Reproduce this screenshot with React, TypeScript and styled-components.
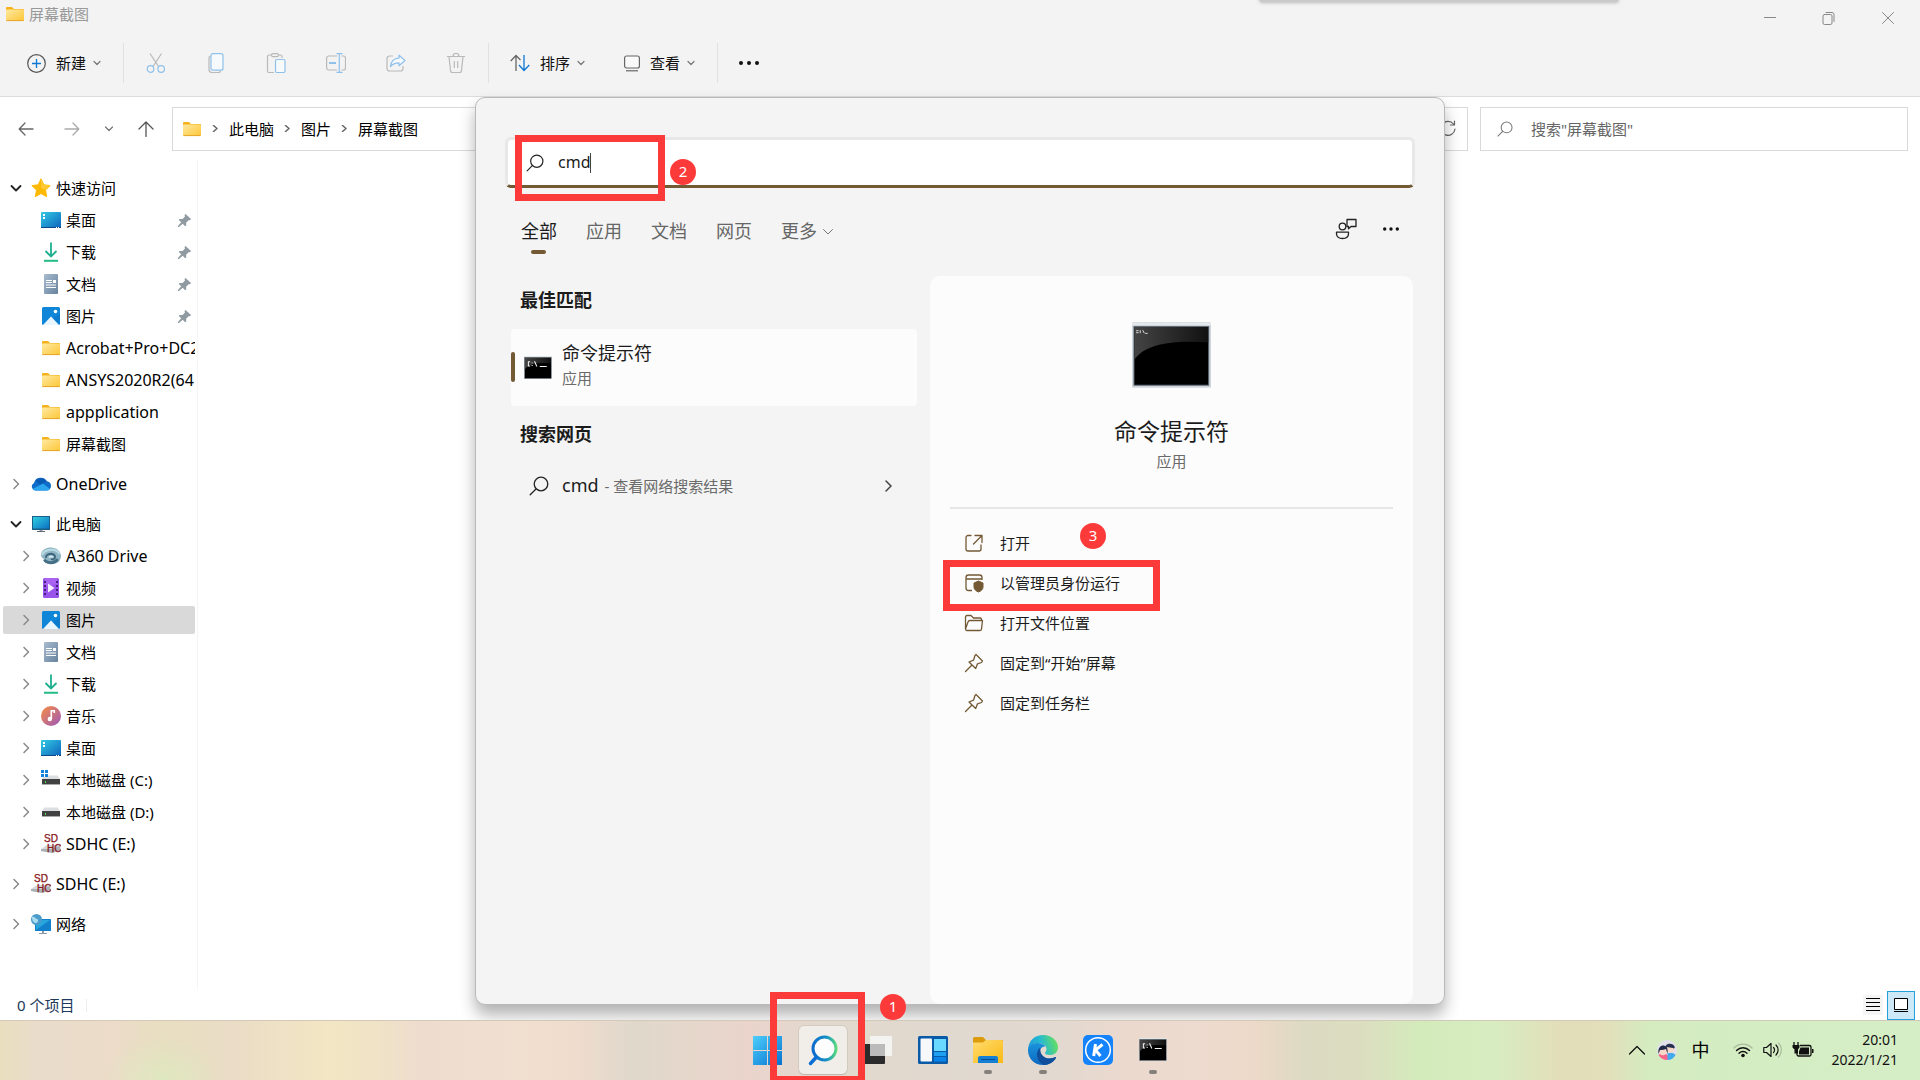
import React, { useId, useState } from "react";
import styled, { createGlobalStyle, css } from "styled-components";

const accent = "#735a35";
const mark = "#fc3a3a";

const GlobalStyle = createGlobalStyle`
  *, *::before, *::after { box-sizing: border-box; }
  body { margin: 0; overflow: hidden; }
  body, button, input {
    font-family: "Noto Sans", "Noto Sans CJK SC", sans-serif;
    font-size: 15px;
    line-height: 24px;
    color: #000;
  }
  button { border: 0; background: none; padding: 0; cursor: default; }
  ul { list-style: none; margin: 0; padding: 0; }
  h1, h2, h3, p { margin: 0; }
  svg { display: block; flex: none; }
`;

/* ---------- layout ---------- */

const Desktop = styled.div`
  display: flex;
  flex-direction: column;
  height: 100vh;
  overflow: hidden;
  background: #fff;
  position: relative;
`;

const Header = styled.header`
  background: #f3f3f3;
  border-bottom: 1px solid #dcdcdc;
`;

const HiddenWindowEdge = styled.div`
  position: absolute;
  top: -8px;
  right: 302px;
  width: 358px;
  height: 10px;
  background: #c9c9c9;
  box-shadow: 0 0 4px rgba(0, 0, 0, 0.35);
`;

const TitleBar = styled.div`
  display: flex;
  justify-content: space-between;
  align-items: flex-start;
  height: 36px;
  padding: 0 3px 0 5px;
`;

const WindowTitle = styled.h1`
  display: flex;
  align-items: center;
  gap: 4px;
  height: 28px;
  font-size: 15px;
  font-weight: 400;
  color: #999;
`;

const WindowControls = styled.div`
  display: flex;
`;

const WindowButton = styled.button`
  display: grid;
  place-items: center;
  width: 59px;
  height: 36px;
`;

const Toolbar = styled.div`
  display: flex;
  align-items: center;
  height: 60px;
  padding: 0 8px 6px;
`;

const TextCommand = styled.button`
  display: flex;
  align-items: center;
  height: 40px;
  padding: 0 20px 0 19px;
  gap: 10px;
  color: #111;
`;

const CommandLabel = styled.span`
  display: flex;
  align-items: center;
  gap: 7px;
`;

const IconCommand = styled.button`
  display: grid;
  place-items: center;
  width: 60px;
  height: 40px;
`;

const Separator = styled.span`
  width: 1px;
  height: 40px;
  margin: 0 2px;
  background: #e1e1e1;
`;

const NavBar = styled.div`
  display: flex;
  align-items: center;
  height: 63px;
  padding: 0 12px 0 3px;
`;

const NavButton = styled.button<{ $narrow?: boolean }>`
  display: grid;
  place-items: center;
  width: ${(p) => (p.$narrow ? 28 : 46)}px;
  height: 40px;
`;

const AddressBar = styled.div`
  display: flex;
  flex: 1;
  align-items: center;
  justify-content: space-between;
  height: 44px;
  margin: 0 12px 0 3px;
  padding: 0 10px 0 9px;
  border: 1px solid #d9d9d9;
`;

const Crumbs = styled.nav`
  display: flex;
  align-items: center;
  gap: 10px;
`;

const Crumb = styled.a`
  color: #000;
  text-decoration: none;
`;

const FolderSearch = styled.label`
  display: flex;
  align-items: center;
  gap: 18px;
  width: 428px;
  height: 44px;
  padding: 0 16px;
  border: 1px solid #d9d9d9;
`;

const FolderSearchInput = styled.input`
  flex: 1;
  min-width: 0;
  padding: 0;
  border: 0;
  outline: 0;
  background: none;
  &::placeholder { color: #666; opacity: 1; }
`;

const Body = styled.div`
  display: flex;
  flex: 1;
  min-height: 0;
`;

const Sidebar = styled.nav`
  display: flex;
  flex-direction: column;
  gap: 12px;
  width: 198px;
  padding: 14px 2px 0 3px;
  border-right: 1px solid #f5f5f5;
`;

const TreeGroup = styled.ul`
  display: flex;
  flex-direction: column;
  gap: 4px;
`;

const TreeItem = styled.li<{ $child?: boolean; $selected?: boolean }>`
  display: flex;
  align-items: center;
  gap: 5px;
  height: 28px;
  padding-left: ${(p) => (p.$child ? 13 : 3)}px;
  border-radius: 2px;
  overflow: hidden;
  background: ${(p) => (p.$selected ? "#d9d9d9" : "transparent")};
`;

const Expander = styled.button`
  display: grid;
  place-items: center;
  flex: none;
  width: 20px;
  height: 20px;
`;

const ExpanderSpace = styled.span`
  flex: none;
  width: 20px;
`;

const TreeLink = styled.a<{ $latin: boolean }>`
  display: flex;
  flex: 1;
  align-items: center;
  gap: 5px;
  min-width: 0;
  color: #000;
  font-size: ${(p) => (p.$latin ? 16 : 15)}px;
  text-decoration: none;
  white-space: nowrap;
`;

const PinSlot = styled.span`
  flex: none;
  padding-right: 4px;
`;

const Content = styled.main`
  flex: 1;
`;

const StatusBar = styled.footer`
  display: flex;
  justify-content: space-between;
  align-items: center;
  height: 30px;
  padding: 0 5px 0 17px;
`;

const ItemCount = styled.span`
  display: flex;
  align-items: center;
  gap: 12px;
  color: #1e395b;
  &::after {
    content: "";
    width: 1px;
    height: 13px;
    background: #eee;
  }
`;

const ViewSwitch = styled.div`
  display: flex;
  align-items: center;
  gap: 4px;
`;

const ViewButton = styled.button<{ $active?: boolean }>`
  display: grid;
  place-items: center;
  width: 20px;
  height: 20px;
  background: #f5f5f5;
  ${(p) =>
    p.$active &&
    css`
      width: 28px;
      height: 29px;
      background: #cde8f6;
      border: 1px solid #26a0da;
    `}
`;

/* ---------- search flyout ---------- */

const Flyout = styled.section`
  position: absolute;
  top: 97px;
  bottom: 75px;
  left: 50%;
  width: 970px;
  transform: translateX(-50%);
  display: flex;
  flex-direction: column;
  padding: 39px 29px 0;
  border: 1px solid #b9b9b9;
  border-radius: 10px;
  background: #f4f4f4;
  color: #1b1b1b;
  box-shadow: 0 10px 16px rgba(0, 0, 0, 0.3);
  z-index: 2;
`;

const SearchBox = styled.label`
  display: flex;
  flex: none;
  align-items: center;
  height: 51px;
  padding: 0 18px;
  border: 3px solid #e8e8e8;
  border-bottom-color: ${accent};
  border-radius: 6px;
  background: #fff;
`;

const SearchInput = styled.input`
  field-sizing: content;
  margin-left: 14px;
  padding: 0 0 2px;
  border: 0;
  outline: 0;
  background: none;
  font-size: 16px;
  color: #1b1b1b;
`;

const Caret = styled.span`
  width: 1px;
  height: 20px;
  background: #444;
`;

const FilterRow = styled.div`
  display: flex;
  flex: none;
  align-items: center;
  justify-content: space-between;
  height: 88px;
  padding: 0 2px 2px 16px;
`;

const Tabs = styled.div`
  display: flex;
  gap: 29px;
`;

const Tab = styled.button<{ $active?: boolean }>`
  position: relative;
  display: flex;
  align-items: center;
  gap: 5px;
  font-size: 18px;
  line-height: 28px;
  color: ${(p) => (p.$active ? "#1b1b1b" : "#666")};
  ${(p) =>
    p.$active &&
    css`
      &::after {
        content: "";
        position: absolute;
        left: 50%;
        bottom: -9px;
        width: 15px;
        height: 4px;
        margin-left: -8px;
        border-radius: 2px;
        background: ${accent};
      }
    `}
`;

const FilterActions = styled.div`
  display: flex;
  gap: 1px;
  padding-bottom: 4px;
`;

const FlyoutIconButton = styled.button`
  display: grid;
  place-items: center;
  width: 44px;
  height: 36px;
`;

const FlyoutBody = styled.div`
  display: grid;
  flex: 1;
  grid-template-columns: minmax(0, 406fr) minmax(0, 483fr);
  column-gap: 13px;
  padding: 0 2px 0 6px;
`;

const SectionTitle = styled.h2`
  padding: 0 0 5px 9px;
  font-size: 18px;
  line-height: 48px;
  font-weight: 700;
`;

const BestMatch = styled.button`
  position: relative;
  display: flex;
  align-items: center;
  gap: 10px;
  width: 100%;
  height: 77px;
  margin-bottom: 4px;
  padding: 0 0 0 13px;
  border-radius: 4px;
  background: #fcfcfc;
  text-align: left;
  &::before {
    content: "";
    position: absolute;
    left: 0;
    top: 23px;
    width: 4px;
    height: 30px;
    border-radius: 2px;
    background: ${accent};
  }
`;

const MatchText = styled.span`
  display: flex;
  flex-direction: column;
  padding-bottom: 6px;
`;

const MatchTitle = styled.span`
  font-size: 18px;
  line-height: 26px;
  color: #1b1b1b;
`;

const Muted = styled.span`
  font-size: 15px;
  line-height: 24px;
  color: #6a6a6a;
`;

const WebResult = styled.button`
  display: flex;
  align-items: center;
  gap: 13px;
  width: 100%;
  height: 46px;
  padding: 0 22px 0 18px;
  text-align: left;
`;

const WebText = styled.span`
  display: flex;
  flex: 1;
  align-items: baseline;
  gap: 6px;
  padding-bottom: 3px;
`;

const Preview = styled.article`
  padding: 46px 20px 0;
  border-radius: 10px;
  background: #fcfcfc;
`;

const PreviewHead = styled.div`
  display: flex;
  flex-direction: column;
  align-items: center;
  padding-bottom: 34px;
  border-bottom: 2px solid #e6e6e6;
`;

const PreviewTitle = styled.h3`
  margin: 28px 0 3px;
  font-size: 23px;
  line-height: 30px;
  font-weight: 400;
`;

const ActionList = styled.ul`
  padding: 14px 0 0 14px;
`;

const ActionButton = styled.button`
  display: flex;
  align-items: center;
  gap: 16px;
  width: 100%;
  height: 40px;
  text-align: left;
  color: #1b1b1b;
`;

/* ---------- taskbar ---------- */

const TaskbarRoot = styled.footer`
  position: relative;
  z-index: 3;
  display: grid;
  grid-template-columns: 1fr auto 1fr;
  flex: none;
  height: 60px;
  border-top: 1px solid #d3c9b9;
  background:
    radial-gradient(ellipse 60px 44px at 8.5% 100%, #dfe8c0, rgba(223, 232, 192, 0)),
    linear-gradient(90deg,
      #e9dfbf 0%, #eadccb 2%, #ecdcc9 6%, #e8dec0 8.5%, #eadcc6 12%,
      #f3e6c4 17%, #f0e3c6 19.5%, #eedccf 22%, #f1dfd0 27%, #efdccd 30%,
      #dfd8cb 33%, #e6d7cb 36%, #ead4cc 39%, #e2d9ce 43%, #e0d9cf 50%,
      #e2d9d0 55%, #ebd9ce 58.5%, #eedbcf 62.5%, #ecd9c8 65.5%, #dcdac2 68%,
      #dcdec0 71%, #d3ebbb 74%, #d8ecc1 78%, #e3ddb9 81.5%, #e3dfbb 83.5%,
      #d4ecc0 86%, #d6eec6 100%);
`;

const TaskbarApps = styled.div`
  grid-column: 2;
  display: flex;
  padding-bottom: 2px;
`;

const TaskSlot = styled.div<{ $running?: boolean }>`
  position: relative;
  display: grid;
  place-items: center;
  width: 55px;
  ${(p) =>
    p.$running &&
    css`
      &::after {
        content: "";
        position: absolute;
        left: 24px;
        bottom: 4px;
        width: 8px;
        height: 4px;
        border-radius: 2px;
        background: #85807a;
      }
    `}
`;

const TaskButton = styled.button<{ $active?: boolean }>`
  display: grid;
  place-items: center;
  width: 48px;
  height: 48px;
  border-radius: 5px;
  ${(p) =>
    p.$active &&
    css`
      background: #f1eee9;
      box-shadow: 0 0 0 1px rgba(0, 0, 0, 0.06), 0 1px 1px rgba(0, 0, 0, 0.1);
    `}
`;

const Tray = styled.div`
  display: flex;
  align-items: center;
  justify-content: flex-end;
  padding: 0 22px 2px 0;
  color: #111;
`;

const TrayButton = styled.button<{ $wide?: boolean }>`
  display: grid;
  place-items: center;
  width: ${(p) => (p.$wide ? 38 : 30)}px;
  height: 40px;
  font-size: 18px;
`;

const TraySpacer = styled.span`
  width: 8px;
`;

const Clock = styled.button`
  margin-left: 14px;
  font-size: 14px;
  line-height: 20px;
  text-align: right;
  color: #111;
`;

/* ---------- tutorial marks ---------- */

const Frame = styled.div<{ $x: number; $y: number; $w: number; $h: number }>`
  position: absolute;
  left: ${(p) => p.$x}px;
  top: ${(p) => p.$y}px;
  width: ${(p) => p.$w}px;
  height: ${(p) => p.$h}px;
  border: 7px solid ${mark};
  pointer-events: none;
`;

const Step = styled.span<{ $x: number; $y: number }>`
  position: absolute;
  left: ${(p) => p.$x}px;
  top: ${(p) => p.$y}px;
  width: 26px;
  height: 26px;
  border-radius: 50%;
  background: ${mark};
  color: #fff;
  font-size: 15px;
  line-height: 24px;
  text-align: center;
  pointer-events: none;
`;

/* ---------- icons ---------- */

type LineProps = { d: string; size?: number; color?: string; width?: number };

const Line = ({ d, size = 20, color = "#333", width = 1 }: LineProps) => (
  <svg width={size} height={size} viewBox={`0 0 ${size} ${size}`} fill="none" stroke={color}
    strokeWidth={width} strokeLinecap="round" strokeLinejoin="round" aria-hidden="true">
    <path d={d} />
  </svg>
);

const SmallDown = () => <Line size={8} d="M1 2.500 4 5.500l3-3" color="#777" width={1.200} />;

const FolderIcon = ({ size = 20 }: { size?: number }) => {
  const id = useId();
  return (
    <svg width={size} height={size} viewBox="0 0 20 20" aria-hidden="true">
      <defs>
        <linearGradient id={id} x1="0" y1="0" x2="1" y2="1">
          <stop offset="0" stopColor="#ffe9a0" />
          <stop offset="1" stopColor="#fdc637" />
        </linearGradient>
      </defs>
      <path d="M1 4a1 1 0 0 1 1-1h5l2 2h10v3H1z" fill="#f5b21c" />
      <rect x="1" y="5.5" width="18" height="11.5" rx=".8" fill={`url(#${id})`} />
      <path d="M1.500 16.600h17" stroke="#e5a52a" />
    </svg>
  );
};

const StarIcon = () => (
  <svg width="20" height="20" viewBox="0 0 20 20" aria-hidden="true">
    <path d="m10 .8 2.800 6 6.400.8-4.700 4.500 1.200 6.600-5.700-3.200-5.700 3.200 1.200-6.600L.8 7.600l6.400-.8z" fill="#fdb900" stroke="#fdb900" strokeLinejoin="round" />
    <path d="m10 .8 2.800 6 6.400.8-4.700 4.500L10 10z" fill="#ffc933" />
  </svg>
);

const DesktopIcon = () => {
  const id = useId();
  return (
    <svg width="20" height="20" viewBox="0 0 20 20" aria-hidden="true">
      <defs>
        <linearGradient id={id} x1="0" y1="0" x2="1" y2="1">
          <stop offset="0" stopColor="#33cbe4" />
          <stop offset="1" stopColor="#0d63bd" />
        </linearGradient>
      </defs>
      <rect x="0" y="2" width="20" height="16" rx="1" fill={`url(#${id})`} />
      <path d="M2 4h2v2H2zM2 7h2v2H2z" fill="#fff" />
      <path d="M0 17h20v1H0z" fill="#0b4a86" />
      <path d="M15 17h1v1h-1zM17 17h1v1h-1z" fill="#fff" />
    </svg>
  );
};

const DownloadIcon = () => (
  <svg width="20" height="20" viewBox="0 0 20 20" fill="none" aria-hidden="true">
    <path d="M10 .5v13.500M4.500 9l5.500 5.500L15.500 9" stroke="#1fae8f" strokeWidth="1.800" />
    <path d="M3 18.800h14" stroke="#23bd84" strokeWidth="2" />
  </svg>
);

const DocumentIcon = () => {
  const id = useId();
  return (
    <svg width="20" height="20" viewBox="0 0 20 20" aria-hidden="true">
      <defs>
        <linearGradient id={id} x1="0" y1="0" x2="1" y2="1">
          <stop offset="0" stopColor="#a9bccf" />
          <stop offset="1" stopColor="#67829f" />
        </linearGradient>
      </defs>
      <rect x="3" y="0" width="14" height="20" rx="1" fill={`url(#${id})`} />
      <path d="M5 6.500h6M5 8.500h6M5 11h10M5 13.500h10" stroke="#fff" />
      <path d="M12 6h3v3h-3z" fill="#fff" />
    </svg>
  );
};

const PictureIcon = () => (
  <svg width="20" height="20" viewBox="0 0 20 20" aria-hidden="true">
    <rect x="1" y="1" width="18" height="18" rx="1.500" fill="#0f86d8" />
    <path d="M2 19 10 10.500l8 8.500z" fill="#e9f6ff" />
    <path d="m12 12.500 7-5v11z" fill="#0a68b4" opacity=".35" />
    <circle cx="14.500" cy="5.500" r="1.800" fill="#fff" />
  </svg>
);

const CloudIcon = () => (
  <svg width="20" height="20" viewBox="0 0 20 20" aria-hidden="true">
    <path d="M4 16.500a4 4 0 0 1-1-7.500 7 7 0 0 1 12.800-1.800A4.800 4.800 0 0 1 20 12a4.500 4.500 0 0 1-4.500 4.500z" fill="#0f6cc8" />
    <path d="M4.500 7A7 7 0 0 1 15.800 7.200L10 11z" fill="#0a5bb5" />
    <path d="M1.500 15 12 9.500l7 5.500a4.500 4.500 0 0 1-3.500 1.500H4A4 4 0 0 1 1.500 15z" fill="#2aa5ee" />
  </svg>
);

const MonitorIcon = () => {
  const id = useId();
  return (
    <svg width="20" height="20" viewBox="0 0 20 20" aria-hidden="true">
      <defs>
        <linearGradient id={id} x1="0" y1="0" x2="1" y2="1">
          <stop offset="0" stopColor="#2fd0df" />
          <stop offset="1" stopColor="#0c6fc4" />
        </linearGradient>
      </defs>
      <rect x="1" y="2" width="18" height="14" fill="#1c5f86" />
      <rect x="2" y="3" width="16" height="11.500" fill={`url(#${id})`} />
      <path d="M8.500 16h3v1.500h-3z" fill="#8d99a3" />
      <path d="M6 17h8v1H6z" fill="#5d6a75" />
    </svg>
  );
};

const A360Icon = () => (
  <svg width="20" height="20" viewBox="0 0 20 20" fill="none" aria-hidden="true">
    <path d="M0 9C0 4 5 1.500 10 1.500S20 5 20 10c0 5-4 8-9 8-4 0-7-1.500-8-5-2-1-3-2.500-3-4z" fill="#8fb5c4" />
    <path d="M1 9C3 3 15 1.500 18.500 8" stroke="#b7dae3" strokeWidth="2.200" />
    <path d="M3.500 13.500C5 17.500 14 18 16.500 13" stroke="#456f86" strokeWidth="3" />
    <path d="M5 12c-1-4 7-6 9-2 .8 2.500-2 4-4 3" stroke="#3d647b" strokeWidth="1.800" />
    <path d="M8 11.500c1-1.500 3.500-1.500 4 0" stroke="#e1eef3" strokeWidth="1.500" />
  </svg>
);

const VideoIcon = () => (
  <svg width="20" height="20" viewBox="0 0 20 20" aria-hidden="true">
    <rect x="2" y="0" width="16" height="20" rx="1.500" fill="#9a53ea" />
    <path d="M4 0h12v6L4 9z" fill="#b06af2" opacity=".7" />
    <path d="M3 3h2v2H3zM3 7h2v2H3zM3 11h2v2H3zM3 15h2v2H3zM15 3h2v2h-2zM15 7h2v2h-2zM15 11h2v2h-2zM15 15h2v2h-2z" fill="#44217e" />
    <path d="m7 5.500 6.500 4.500L7 14.500z" fill="#f4ecff" />
  </svg>
);

const MusicIcon = () => {
  const id = useId();
  return (
    <svg width="20" height="20" viewBox="0 0 20 20" aria-hidden="true">
      <defs>
        <linearGradient id={id} x1="0" y1="0" x2="1" y2="1">
          <stop offset=".1" stopColor="#f0894f" />
          <stop offset=".9" stopColor="#a45cae" />
        </linearGradient>
      </defs>
      <circle cx="10" cy="10" r="10" fill={`url(#${id})`} />
      <circle cx="8.800" cy="13" r="2.200" fill="#fff" />
      <path d="M10.300 13V4.800h3V7" stroke="#fff" strokeWidth="1.600" fill="none" />
    </svg>
  );
};

const DriveIcon = ({ system }: { system?: boolean }) => (
  <svg width="20" height="20" viewBox="0 0 20 20" aria-hidden="true">
    <path d="M3.500 5.500h13L19 9H1z" fill="#dcdee1" />
    <rect x="1" y="9" width="18" height="6" fill="#414141" />
    <path d="M1 14.500h18" stroke="#aaa" />
    <path d="M4 11h1v2H4z" fill="#4be04b" />
    {system && (
      <>
        <path d="M0 0h7v7H0z" fill="#fff" />
        <path d="M0 0h3v3H0zM4 0h3v3H4zM0 4h3v3H0zM4 4h3v3H4z" fill="#1583dc" />
      </>
    )}
  </svg>
);

const SdText = styled.text`
  font-family: "Liberation Sans Narrow", "Liberation Sans", sans-serif;
  font-size: 10px;
  fill: #8b1a1e;
  stroke: #8b1a1e;
  stroke-width: 0.3px;
`;

const SdIcon = () => (
  <svg width="20" height="20" viewBox="0 0 20 20" aria-hidden="true">
    <path d="M0 15 6 11h13l1 5-8 3-12-2z" fill="#d4d8db" />
    <path d="M0 15h10l9-3v4l-8 3-11-2z" fill="#aab1b7" />
    <SdText x="3" y="8">SD</SdText>
    <SdText x="6" y="18">HC</SdText>
  </svg>
);

const NetworkIcon = () => (
  <svg width="20" height="20" viewBox="0 0 20 20" aria-hidden="true">
    <rect x="4" y="5" width="16" height="12" rx=".5" fill="#1380cc" />
    <path d="M5 6h14l-14 10z" fill="#27a5dd" />
    <path d="M11 17h2v2h-2zM8 19h8v1H8z" fill="#8d99a3" />
    <circle cx="5.500" cy="5.500" r="5.500" fill="#4a9ccb" />
    <path d="M1 3c3-1 3 2 5 2s1 4-1 4-4-2-4-6z" fill="#a9dcf0" />
  </svg>
);

const PinnedIcon = () => (
  <svg width="13" height="13" viewBox="0 0 13 13" aria-hidden="true">
    <path d="M7.500 0 13 5l-1 1.200-1-.2L8.200 8.500v3l-1 .8-2.500-2.500L1 13H0v-1l3.200-3.700L.8 6l.8-1h2.900L7 2.500 6.500 1z" fill="#8f9aa1" />
  </svg>
);

const ConsoleIcon = ({ size }: { size: number }) => {
  const id = useId();
  return (
    <svg width={size} height={(size * 5) / 6} viewBox="0 0 48 40" aria-hidden="true">
      <defs>
        <linearGradient id={id} x1="0" y1="0" x2="1" y2="0">
          <stop offset="0" stopColor="#444" />
          <stop offset="1" stopColor="#111" />
        </linearGradient>
      </defs>
      <rect width="48" height="40" rx=".8" fill="#cfd5da" />
      <path d="M0 1h48" stroke="#e5e9ec" strokeWidth="1.500" />
      <rect x="1.200" y="2.800" width="45.400" height="35.600" fill="#000" stroke="#5d6975" strokeWidth=".6" />
      <path d="M1.500 3h44.800v9.500C26 11 8 13 1.500 23z" fill={`url(#${id})`} />
      {size > 50 ? (
        <path d="M2.500 5.300h1.500M2.500 6.500h1.500M5 5v1.800M6.500 5 7.500 6.800M8 6.900h1.500" stroke="#ddd" strokeWidth=".6" />
      ) : (
        <path d="M10.500 10H7.500v7h3M14 11v1.500M14 15.500v1.500M18 9l4 9M27 18h12" stroke="#f2f2f2" strokeWidth="1.800" fill="none" />
      )}
    </svg>
  );
};

const StartIcon = () => {
  const id = useId();
  return (
    <svg width="30" height="30" viewBox="0 0 30 30" aria-hidden="true">
      <defs>
        <linearGradient id={id} x1="0" y1="0" x2="30" y2="30" gradientUnits="userSpaceOnUse">
          <stop offset="0" stopColor="#4fd0fb" />
          <stop offset="1" stopColor="#0570cf" />
        </linearGradient>
      </defs>
      <path d="M0 1h14v14H0zM15 1h14v14H15zM0 16h14v14H0zM15 16h14v14H15z" fill={`url(#${id})`} />
    </svg>
  );
};

const TaskSearchIcon = () => {
  const id = useId();
  return (
    <svg width="32" height="32" viewBox="0 0 32 32" fill="none" aria-hidden="true">
      <defs>
        <linearGradient id={id} x1="4" y1="0" x2="30" y2="0" gradientUnits="userSpaceOnUse">
          <stop offset="0" stopColor="#0d67cf" />
          <stop offset=".6" stopColor="#1590c4" />
          <stop offset="1" stopColor="#5fe07a" />
        </linearGradient>
      </defs>
      <circle cx="17.500" cy="14.500" r="11.500" fill="#fdfdfd" stroke={`url(#${id})`} strokeWidth="3" />
      <path d="m9.500 23-6 6.500" stroke="#0d6fd6" strokeWidth="3.500" strokeLinecap="round" />
    </svg>
  );
};

const TaskViewIcon = () => (
  <svg width="32" height="32" viewBox="0 0 32 32" aria-hidden="true">
    <rect x="1" y="10" width="22" height="20" rx="1" fill="#2b2b2b" />
    <rect x="8" y="2" width="22" height="20" rx="1" fill="#f5f5f5" opacity=".9" />
    <path d="M8 10h15v12H8z" fill="#bbb" />
  </svg>
);

const WidgetsIcon = () => (
  <svg width="30" height="28" viewBox="0 0 30 28" aria-hidden="true">
    <rect width="30" height="28" rx="1.500" fill="#0a5aa8" />
    <rect x="2.500" y="2.500" width="11.500" height="23" rx="1" fill="#f6f8fa" />
    <path d="M16 3h12v12H16z" fill="#69d9ff" />
    <path d="M16 16h12v4H16z" fill="#1ea0f2" />
    <path d="M16 21h12v4.500H16z" fill="#0a84ea" />
  </svg>
);

const ExplorerIcon = () => {
  const id = useId();
  return (
    <svg width="30" height="28" viewBox="0 0 30 28" aria-hidden="true">
      <defs>
        <linearGradient id={id} x1="0" y1="0" x2="1" y2="1">
          <stop offset="0" stopColor="#ffdc70" />
          <stop offset="1" stopColor="#fbb914" />
        </linearGradient>
      </defs>
      <path d="M0 2.500A1.500 1.500 0 0 1 1.500 1H10l3 3h17v6H0z" fill="#dd9b0e" />
      <path d="M0 6.500h10l3-2.500h16l1 1v22H0z" fill={`url(#${id})`} />
      <path d="M5 27v-5a2 2 0 0 1 2-2h16a2 2 0 0 1 2 2v5z" fill="#1580d3" />
      <path d="M8 23.500h14" stroke="#0b4f93" />
    </svg>
  );
};

const EdgeIcon = () => {
  const a = useId();
  const b = useId();
  return (
    <svg width="30" height="30" viewBox="0 0 30 30" aria-hidden="true">
      <defs>
        <linearGradient id={a} x1="0" y1=".6" x2="1" y2=".4">
          <stop offset="0" stopColor="#2299d8" />
          <stop offset=".45" stopColor="#25b9d2" />
          <stop offset="1" stopColor="#68e05c" />
        </linearGradient>
        <linearGradient id={b} x1="0" y1="0" x2="0" y2="1">
          <stop offset="0" stopColor="#1a93dc" />
          <stop offset="1" stopColor="#0b69c0" />
        </linearGradient>
      </defs>
      <path d="M0 14C1 5 7 0 15 0c9 0 15 6 15 12.500 0 5-4 7.500-8 7.500-3 0-5-1-5-2 0-.8 1.500-1.500 1.500-4 0-3.500-4-6-8.500-6C5 8 1 11 0 14z" fill={`url(#${a})`} />
      <path d="M0 14c1-4 5-6 9.500-6 3.500 0 6.500 1.500 8 3.500-5 0-6.500 4-5.500 8 1 5 6 9 12 7.500C20 30 16 30 15 30 6 30-.5 23 0 14z" fill={`url(#${b})`} />
      <path d="M12.500 12.500c-6 4-4 14.500 3.500 17.500 5 0 10-3 12-7 .4-.8-.2-1.200-.8-.9C20 25.500 11 22 12.500 12.500z" fill="#0f4f9c" />
    </svg>
  );
};

const KIcon = () => (
  <svg width="30" height="30" viewBox="0 0 30 30" fill="none" aria-hidden="true">
    <rect width="30" height="30" rx="5" fill="#1583fb" />
    <circle cx="15" cy="15" r="12.300" stroke="#fff" strokeWidth="1.500" />
    <path d="m12.500 9-1.800 12M19.500 9.500 12.500 15l5 6" stroke="#fff" strokeWidth="3" />
  </svg>
);

const MagnifierIcon = ({ color = "#222", size = 20 }: { color?: string; size?: number }) => (
  <svg width={size} height={size} viewBox="0 0 20 20" fill="none" stroke={color} strokeWidth="1.300" strokeLinecap="round" aria-hidden="true">
    <circle cx="12" cy="8" r="6.800" />
    <path d="M7 13 1.200 18.800" />
  </svg>
);

const AvatarIcon = () => (
  <svg width="20" height="20" viewBox="0 0 20 20" aria-hidden="true">
    <circle cx="10" cy="10" r="10" fill="#e1e1ea" />
    <path d="M1.500 15c2-2 7-2 9 0 1 1.500 1 3.500 0 5-4 .2-7-1.500-9-5z" fill="#f7668a" />
    <path d="M10.500 13.500c3-1.500 6-1 8 1.500-1.500 3-4.500 5-8 5z" fill="#43a9ef" />
    <circle cx="13" cy="8.500" r="4.300" fill="#f6d7c8" />
    <path d="M8.500 7.500C8 3 16 2 17.800 7c-.3 1.500-1.300 2-1.800 1-3 0-5-1-7.500-.5z" fill="#26304f" />
    <circle cx="6" cy="11" r="4.300" fill="#f6d7c8" />
    <path d="M1.500 14c-1-7 3-9 6-8.300 3 .8 3.500 4 3 8.300l-1.500-5c-2 .8-4 1.200-6 1z" fill="#202a48" />
  </svg>
);

const BatteryIcon = () => (
  <svg width="22" height="18" viewBox="0 0 22 18" fill="none" aria-hidden="true">
    <path d="M8 4.500h9.500a1.500 1.500 0 0 1 1.500 1.500v7.500a1.500 1.500 0 0 1-1.500 1.500H6.500A1.500 1.500 0 0 1 5 13.500V10" stroke="#111" strokeWidth="1.300" />
    <path d="M20 8h1.500v4H20zM8.500 6.500H17v7H7v-3z" fill="#111" />
    <path d="M2 1v3M6 1v3" stroke="#111" strokeWidth="1.300" />
    <path d="M.5 4h7v2.500L6 8.500v4H2.500v-4L.5 6.500z" fill="#111" />
  </svg>
);

/* ---------- data ---------- */

type Node = {
  label: string;
  icon: React.ReactNode;
  pinned?: boolean;
  expandable?: boolean;
  open?: boolean;
  selected?: boolean;
};

const groups: { head: Node; children: Node[] }[] = [
  {
    head: { label: "快速访问", icon: <StarIcon />, expandable: true, open: true },
    children: [
      { label: "桌面", icon: <DesktopIcon />, pinned: true },
      { label: "下载", icon: <DownloadIcon />, pinned: true },
      { label: "文档", icon: <DocumentIcon />, pinned: true },
      { label: "图片", icon: <PictureIcon />, pinned: true },
      { label: "Acrobat+Pro+DC2", icon: <FolderIcon /> },
      { label: "ANSYS2020R2(64", icon: <FolderIcon /> },
      { label: "appplication", icon: <FolderIcon /> },
      { label: "屏幕截图", icon: <FolderIcon /> },
    ],
  },
  { head: { label: "OneDrive", icon: <CloudIcon />, expandable: true }, children: [] },
  {
    head: { label: "此电脑", icon: <MonitorIcon />, expandable: true, open: true },
    children: [
      { label: "A360 Drive", icon: <A360Icon />, expandable: true },
      { label: "视频", icon: <VideoIcon />, expandable: true },
      { label: "图片", icon: <PictureIcon />, expandable: true, selected: true },
      { label: "文档", icon: <DocumentIcon />, expandable: true },
      { label: "下载", icon: <DownloadIcon />, expandable: true },
      { label: "音乐", icon: <MusicIcon />, expandable: true },
      { label: "桌面", icon: <DesktopIcon />, expandable: true },
      { label: "本地磁盘 (C:)", icon: <DriveIcon system />, expandable: true },
      { label: "本地磁盘 (D:)", icon: <DriveIcon />, expandable: true },
      { label: "SDHC (E:)", icon: <SdIcon />, expandable: true },
    ],
  },
  { head: { label: "SDHC (E:)", icon: <SdIcon />, expandable: true }, children: [] },
  { head: { label: "网络", icon: <NetworkIcon />, expandable: true }, children: [] },
];

const editCommands: { label: string; icon: React.ReactNode }[] = [
  {
    label: "剪切",
    icon: (
      <svg width="20" height="20" viewBox="0 0 20 20" fill="none" strokeWidth="1.200">
        <path d="m4 .5 8.500 13M15.500.5 7 13.500" stroke="#b9b9b9" />
        <circle cx="4.500" cy="16" r="3.300" stroke="#8fc1ea" />
        <circle cx="15.200" cy="16" r="3.300" stroke="#8fc1ea" />
      </svg>
    ),
  },
  {
    label: "复制",
    icon: (
      <svg width="20" height="20" viewBox="0 0 20 20" fill="none" strokeWidth="1.200">
        <path d="M4.500 3A2 2 0 0 0 3 5v11.500A3 3 0 0 0 6 19.500h6.500A2 2 0 0 0 14.500 18" stroke="#b9b9b9" />
        <rect x="5" y=".7" width="12" height="16.500" rx="2" stroke="#8fc1ea" fill="#f6fafd" />
      </svg>
    ),
  },
  {
    label: "粘贴",
    icon: (
      <svg width="20" height="20" viewBox="0 0 20 20" fill="none" strokeWidth="1.200">
        <path d="M6 2H3a1.500 1.500 0 0 0-1.500 1.500V18A1.500 1.500 0 0 0 3 19.500h5M12 2h2.500A1.500 1.500 0 0 1 16 3.500V5" stroke="#b9b9b9" />
        <rect x="5.500" y=".7" width="7" height="3" rx="1.500" stroke="#b9b9b9" />
        <rect x="9.500" y="6.500" width="9.500" height="13" rx="1.500" stroke="#8fc1ea" fill="#f6fafd" />
      </svg>
    ),
  },
  {
    label: "重命名",
    icon: (
      <svg width="20" height="20" viewBox="0 0 20 20" fill="none" strokeWidth="1.200">
        <path d="M11 3H2.500A2 2 0 0 0 .6 5v10a2 2 0 0 0 2 2H11M15.500 3h2a2 2 0 0 1 2 2v10a2 2 0 0 1-2 2h-2" stroke="#b9b9b9" />
        <path d="M3 10h7" stroke="#8fc1ea" strokeWidth="2" />
        <path d="M13.300 1v18M10.500.7h6M10.500 19.400h6" stroke="#8fc1ea" />
      </svg>
    ),
  },
  {
    label: "共享",
    icon: (
      <svg width="20" height="20" viewBox="0 0 20 20" fill="none" strokeWidth="1.200" strokeLinejoin="round">
        <path d="M7 3H3.500A2.500 2.500 0 0 0 1 5.500v10A2.500 2.500 0 0 0 3.500 18h11a2.500 2.500 0 0 0 2.500-2.500V13" stroke="#b9b9b9" />
        <path d="M13 2.200 19 7.500l-6 5.200V9.800c-4 0-6.500 1-8.500 3.800.5-4.800 3-8.300 8.500-8.500z" stroke="#8fc1ea" fill="#f6fafd" />
      </svg>
    ),
  },
  {
    label: "删除",
    icon: (
      <svg width="20" height="20" viewBox="0 0 20 20" fill="none" stroke="#b9b9b9" strokeWidth="1.200">
        <path d="M1 3.500h18M7 3.500a3 3 0 0 1 6 0M3 3.500l1.500 14a2 2 0 0 0 2 2h7a2 2 0 0 0 2-2l1.500-14M8.300 8v7M11.700 8v7" />
      </svg>
    ),
  },
];

const pinPath = "M12 1.500 18.500 8l-1 1.500-4 1.300-1.800 4.700L5 9l4.500-1.800L11 2.500zM8 12l-6.500 6.500";

const previewActions: { label: string; icon: React.ReactNode }[] = [
  { label: "打开", icon: <Line color={accent} width={1.300} d="M7 2.500H4A2 2 0 0 0 2 4.500V16a2 2 0 0 0 2 2h11a2 2 0 0 0 2-2v-4M11 2.500h7v7M17.500 3 9.500 11" /> },
  {
    label: "以管理员身份运行",
    icon: (
      <svg width="20" height="20" viewBox="0 0 20 20" fill="none" stroke={accent} aria-hidden="true">
        <path d="M8 17.500H4.500A2.500 2.500 0 0 1 2 15V4.500A2.500 2.500 0 0 1 4.500 2h11A2.500 2.500 0 0 1 18 4.500V7M2 6h16" strokeWidth="1.300" />
        <path d="m14.500 8 4.500 2v4c0 2.500-2 4-4.500 5-2.500-1-4.500-2.500-4.500-5v-4z" fill={accent} />
      </svg>
    ),
  },
  { label: "打开文件位置", icon: <Line color={accent} width={1.300} d="M1.500 16V4A1.500 1.500 0 0 1 3 2.500h4L9.500 5H16a1.500 1.500 0 0 1 1.500 1.500V7M1.500 16 4 9a2 2 0 0 1 2-1.500h12.500L17.500 16a1.500 1.500 0 0 1-1.500 1.500H3A1.500 1.500 0 0 1 1.500 16z" /> },
  { label: "固定到“开始”屏幕", icon: <Line color={accent} width={1.300} d={pinPath} /> },
  { label: "固定到任务栏", icon: <Line color={accent} width={1.300} d={pinPath} /> },
];

const filters = ["全部", "应用", "文档", "网页"];

/* ---------- parts ---------- */

const isLatin = (label: string) => /^[\x20-\x7e]+$/.test(label);

const TreeRow = ({ node, child }: { node: Node; child?: boolean }) => (
  <TreeItem $child={child} $selected={node.selected}>
    {node.expandable ? (
      <Expander aria-label={node.open ? "折叠" : "展开"}>
        {node.open ? (
          <Line size={12} d="M1.500 4 6 8.500 10.500 4" color="#222" width={1.800} />
        ) : (
          <Line size={12} d="M4 1.500 8.500 6 4 10.500" color="#8a8a8a" width={1.500} />
        )}
      </Expander>
    ) : (
      <ExpanderSpace />
    )}
    <TreeLink href="#" $latin={isLatin(node.label)}>
      {node.icon}
      {node.label}
    </TreeLink>
    {node.pinned && <PinSlot><PinnedIcon /></PinSlot>}
  </TreeItem>
);

const Dots = ({ width, r }: { width: number; r: number }) => (
  <svg width={width} height="6" viewBox={`0 0 ${width} 6`} fill="#111" aria-hidden="true">
    <circle cx={r} cy="3" r={r} />
    <circle cx={width / 2} cy="3" r={r} />
    <circle cx={width - r} cy="3" r={r} />
  </svg>
);

const Explorer = () => (
  <>
    <Header>
      <TitleBar>
        <WindowTitle><FolderIcon />屏幕截图</WindowTitle>
        <WindowControls>
          <WindowButton aria-label="最小化"><Line size={12} d="M0 5.500h12" color="#888" /></WindowButton>
          <WindowButton aria-label="还原">
            <Line size={13} d="M2.500 2.500h6a1.500 1.500 0 0 1 1.500 1.500v7a1.500 1.500 0 0 1-1.500 1.500h-6A1.500 1.500 0 0 1 1 11V4a1.500 1.500 0 0 1 1.500-1.500zM4 .5h6a2 2 0 0 1 2 2v7" color="#888" />
          </WindowButton>
          <WindowButton aria-label="关闭"><Line size={12} d="m.5.5 11 11M11.500.5l-11 11" color="#888" /></WindowButton>
        </WindowControls>
      </TitleBar>
      <Toolbar>
        <TextCommand>
          <svg width="19" height="19" viewBox="0 0 19 19" fill="none" aria-hidden="true">
            <circle cx="9.500" cy="9.500" r="8.800" stroke="#555" strokeWidth="1.200" />
            <path d="M9.500 5v9M5 9.500h9" stroke="#0f78d4" strokeWidth="1.300" />
          </svg>
          <CommandLabel>新建<SmallDown /></CommandLabel>
        </TextCommand>
        <Separator />
        {editCommands.map((c) => (
          <IconCommand key={c.label} aria-label={c.label}>{c.icon}</IconCommand>
        ))}
        <Separator />
        <TextCommand>
          <svg width="20" height="18" viewBox="0 0 20 18" fill="none" strokeWidth="1.300" aria-hidden="true">
            <path d="M6 17V1.500M.7 7 6 1.500 10.500 6" stroke="#666" />
            <path d="M14 1v15.500M9 11l5 5.500 5.300-5.500" stroke="#0f78d4" />
          </svg>
          <CommandLabel>排序<SmallDown /></CommandLabel>
        </TextCommand>
        <TextCommand>
          <svg width="16" height="17" viewBox="0 0 16 17" fill="none" stroke="#666" strokeWidth="1.200" aria-hidden="true">
            <rect x=".6" y="1" width="14.800" height="12" rx="2" fill="#fafafa" />
            <path d="M2 15.800h12" />
          </svg>
          <CommandLabel>查看<SmallDown /></CommandLabel>
        </TextCommand>
        <Separator />
        <TextCommand aria-label="更多选项"><Dots width={20} r={2} /></TextCommand>
      </Toolbar>
    </Header>
    <NavBar>
      <NavButton aria-label="后退"><Line size={16} d="M15 8H1.500M7 2 1.200 8 7 14" color="#666" width={1.300} /></NavButton>
      <NavButton aria-label="前进"><Line size={16} d="M1 8h13.500M9 2l5.800 6L9 14" color="#aaa" width={1.300} /></NavButton>
      <NavButton $narrow aria-label="最近的位置"><Line size={8} d="M.5 2 4 5.500 7.500 2" color="#777" width={1.300} /></NavButton>
      <NavButton aria-label="上移"><Line size={16} d="M8 15.500V1M1 8 8 1l7 7" color="#555" width={1.300} /></NavButton>
      <AddressBar>
        <Crumbs aria-label="路径">
          <FolderIcon />
          {["此电脑", "图片", "屏幕截图"].map((c) => (
            <React.Fragment key={c}>
              <Line size={7} d="M1.500.5 5 3.500 1.500 6.500" color="#666" width={1.500} />
              <Crumb href="#">{c}</Crumb>
            </React.Fragment>
          ))}
        </Crumbs>
        <Line size={18} d="M14.500 4A7 7 0 1 0 16 9M15.500 1v4h-4" color="#666" width={1.200} />
      </AddressBar>
      <FolderSearch>
        <MagnifierIcon size={16} color="#777" />
        <FolderSearchInput type="text" aria-label="搜索文件夹" placeholder={'搜索"屏幕截图"'} />
      </FolderSearch>
    </NavBar>
    <Body>
      <Sidebar aria-label="导航窗格">
        {groups.map((g) => (
          <TreeGroup key={g.head.label}>
            <TreeRow node={g.head} />
            {g.children.map((n) => <TreeRow key={n.label} node={n} child />)}
          </TreeGroup>
        ))}
      </Sidebar>
      <Content />
    </Body>
    <StatusBar>
      <ItemCount>0 个项目</ItemCount>
      <ViewSwitch>
        <ViewButton aria-label="详细信息">
          <svg width="14" height="14" viewBox="0 0 14 14" stroke="#000" aria-hidden="true"><path d="M0 .5h14M0 4.500h14M0 8.500h14M0 12.500h14" /></svg>
        </ViewButton>
        <ViewButton $active aria-label="大图标">
          <svg width="14" height="15" viewBox="0 0 14 15" stroke="#000" fill="#fff" aria-hidden="true"><path d="M.5.500h13v11H.500zM0 13.500h14" /></svg>
        </ViewButton>
      </ViewSwitch>
    </StatusBar>
  </>
);

const SearchFlyout = () => {
  const [query, setQuery] = useState("cmd");
  return (
    <Flyout aria-label="搜索">
      <SearchBox>
        <MagnifierIcon size={18} />
        <SearchInput type="text" aria-label="搜索内容" value={query} onChange={(e) => setQuery(e.target.value)} />
        <Caret />
      </SearchBox>
      <FilterRow>
        <Tabs>
          {filters.map((f, i) => <Tab key={f} $active={i === 0}>{f}</Tab>)}
          <Tab>更多<Line size={12} d="M1.500 4.500 6 9l4.500-4.500" color="#777" /></Tab>
        </Tabs>
        <FilterActions>
          <FlyoutIconButton aria-label="反馈">
            <svg width="22" height="22" viewBox="0 0 22 22" fill="none" stroke="#222" strokeWidth="1.300" strokeLinejoin="round" aria-hidden="true">
              <circle cx="7.500" cy="8.500" r="3.300" />
              <path d="M1.500 14.200h12v1.500c0 3-2.500 4.800-6 4.800s-6-1.800-6-4.800zM12 1.500h9v7h-5l-2.500 2.200V8.500H12z" />
            </svg>
          </FlyoutIconButton>
          <FlyoutIconButton aria-label="选项"><Dots width={16} r={1.700} /></FlyoutIconButton>
        </FilterActions>
      </FilterRow>
      <FlyoutBody>
        <div>
          <SectionTitle>最佳匹配</SectionTitle>
          <BestMatch>
            <ConsoleIcon size={28} />
            <MatchText>
              <MatchTitle>命令提示符</MatchTitle>
              <Muted>应用</Muted>
            </MatchText>
          </BestMatch>
          <SectionTitle>搜索网页</SectionTitle>
          <WebResult>
            <MagnifierIcon />
            <WebText>
              <MatchTitle>cmd</MatchTitle>
              <Muted>- 查看网络搜索结果</Muted>
            </WebText>
            <Line size={12} d="M3 1l5 5-5 5" color="#444" width={1.500} />
          </WebResult>
        </div>
        <Preview>
          <PreviewHead>
            <ConsoleIcon size={79} />
            <PreviewTitle>命令提示符</PreviewTitle>
            <Muted>应用</Muted>
          </PreviewHead>
          <ActionList>
            {previewActions.map((a) => (
              <li key={a.label}><ActionButton>{a.icon}{a.label}</ActionButton></li>
            ))}
          </ActionList>
        </Preview>
      </FlyoutBody>
      <Frame $x={39} $y={37} $w={150} $h={66} />
      <Step $x={194} $y={61}>2</Step>
      <Frame $x={467} $y={462} $w={217} $h={51} />
      <Step $x={604} $y={425}>3</Step>
    </Flyout>
  );
};

const MarkAnchor = styled.div`
  position: absolute;
  left: 50%;
  top: -1px;
`;

const SearchMark = () => (
  <MarkAnchor>
    <Frame $x={-190} $y={-28} $w={95} $h={91} />
    <Step $x={-80} $y={-26}>1</Step>
  </MarkAnchor>
);

const Taskbar = () => (
  <TaskbarRoot>
    <TaskbarApps>
      <TaskSlot><TaskButton aria-label="开始"><StartIcon /></TaskButton></TaskSlot>
      <TaskSlot><TaskButton $active aria-label="搜索"><TaskSearchIcon /></TaskButton></TaskSlot>
      <TaskSlot><TaskButton aria-label="任务视图"><TaskViewIcon /></TaskButton></TaskSlot>
      <TaskSlot><TaskButton aria-label="小组件"><WidgetsIcon /></TaskButton></TaskSlot>
      <TaskSlot $running><TaskButton aria-label="文件资源管理器"><ExplorerIcon /></TaskButton></TaskSlot>
      <TaskSlot $running><TaskButton aria-label="Edge"><EdgeIcon /></TaskButton></TaskSlot>
      <TaskSlot><TaskButton aria-label="酷狗音乐"><KIcon /></TaskButton></TaskSlot>
      <TaskSlot $running><TaskButton aria-label="命令提示符"><ConsoleIcon size={28} /></TaskButton></TaskSlot>
      <SearchMark />
    </TaskbarApps>
    <Tray>
      <TrayButton aria-label="显示隐藏的图标"><Line size={16} d="M.5 12 8 4.500l7.500 7.500" color="#111" width={1.300} /></TrayButton>
      <TrayButton aria-label="好友"><AvatarIcon /></TrayButton>
      <TrayButton $wide>中</TrayButton>
      <TraySpacer />
      <TrayButton aria-label="网络">
        <svg width="20" height="16" viewBox="0 0 20 16" fill="none" strokeWidth="1.400" strokeLinecap="round" aria-hidden="true">
          <path d="M1 6a12.500 12.500 0 0 1 18 0" stroke="#a9bb9d" />
          <path d="M3.500 8.500a9 9 0 0 1 13 0M6 11.200a5.600 5.600 0 0 1 8 0" stroke="#111" />
          <circle cx="10" cy="13.500" r="1.800" fill="#111" />
        </svg>
      </TrayButton>
      <TrayButton aria-label="音量">
        <svg width="20" height="16" viewBox="0 0 20 16" fill="none" stroke="#111" strokeWidth="1.200" strokeLinecap="round" strokeLinejoin="round" aria-hidden="true">
          <path d="M.8 5.500h2.700L8 1.500v13l-4.500-4H.8zM10.500 5.500a3.500 3.500 0 0 1 0 5M13 3a7 7 0 0 1 0 10" />
          <path d="M15.500 1a10 10 0 0 1 0 14" stroke="#a9bb9d" />
        </svg>
      </TrayButton>
      <TrayButton aria-label="电池"><BatteryIcon /></TrayButton>
      <Clock>20:01<br />2022/1/21</Clock>
    </Tray>
  </TaskbarRoot>
);

export default function App() {
  return (
    <Desktop>
      <GlobalStyle />
      <HiddenWindowEdge />
      <Explorer />
      <SearchFlyout />
      <Taskbar />
    </Desktop>
  );
}
